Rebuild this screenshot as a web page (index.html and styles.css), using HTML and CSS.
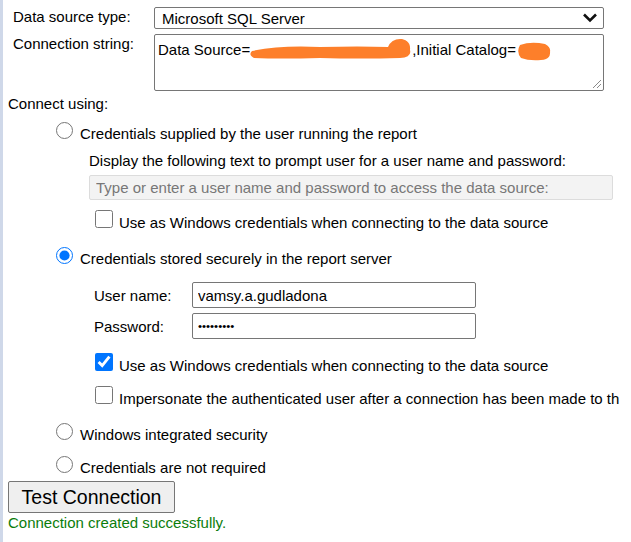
FILE: index.html
```html
<!DOCTYPE html>
<html lang="en">
<head>
<meta charset="utf-8">
<title>Data source</title>
<link rel="stylesheet" href="styles.css">
</head>
<body>
<div class="page">
  <div class="source-grid">
    <label class="field-label">Data source type:</label>
    <div class="select">
      <span>Microsoft SQL Server</span>
      <svg class="chevron" width="16" height="10" viewBox="0 0 16 10"><polyline points="2,1.5 8,7.5 14,1.5" fill="none" stroke="#111" stroke-width="2.6"/></svg>
    </div>
    <label class="field-label">Connection string:</label>
    <div class="textarea">
      <span>Data Source=</span><svg class="redact" width="162" height="24" viewBox="0 0 162 24"><path d="M2 14 Q30 8 70 10 Q110 9 138 10 Q142 1 152 2 Q161 4 160 13 Q162 20 150 21 Q110 22 70 21 Q30 22 4 21 Q-2 18 2 14 Z" fill="#fd7f2a"/></svg><span>,Initial Catalog=</span><svg class="redact2" width="34" height="20" viewBox="0 0 34 20"><path d="M3 4 Q14 0 28 3 Q34 6 33 11 Q34 18 24 19 Q12 20 4 17 Q-1 11 3 4 Z" fill="#fd7f2a"/></svg>
      <svg class="grip" width="10" height="10" viewBox="0 0 10 10"><line x1="1" y1="9" x2="9" y2="1" stroke="#8a8a8a" stroke-width="1"/><line x1="5" y1="9" x2="9" y2="5" stroke="#8a8a8a" stroke-width="1"/></svg>
    </div>
  </div>

  <div class="connect-label">Connect using:</div>

  <label class="radio-row gap-first"><input type="radio" name="cred"><span>Credentials supplied by the user running the report</span></label>
  <div class="prompt-text">Display the following text to prompt user for a user name and password:</div>
  <input class="prompt-input" type="text" disabled placeholder="Type or enter a user name and password to access the data source:">
  <label class="check-row gap-check1"><input type="checkbox"><span>Use as Windows credentials when connecting to the data source</span></label>

  <label class="radio-row gap-stored"><input type="radio" name="cred" checked><span>Credentials stored securely in the report server</span></label>
  <div class="cred-row gap-user">
    <label class="cred-label">User name:</label>
    <input class="cred-input" type="text" value="vamsy.a.gudladona">
  </div>
  <div class="cred-row gap-pass">
    <label class="cred-label">Password:</label>
    <input class="cred-input pw-input" type="password" value="password1">
  </div>
  <label class="check-row gap-check2"><input type="checkbox" checked><span>Use as Windows credentials when connecting to the data source</span></label>
  <label class="check-row gap-check3"><input type="checkbox"><span>Impersonate the authenticated user after a connection has been made to the data source</span></label>

  <label class="radio-row gap-windows"><input type="radio" name="cred"><span>Windows integrated security</span></label>
  <label class="radio-row gap-none"><input type="radio" name="cred"><span>Credentials are not required</span></label>

  <button class="test-btn" type="button">Test Connection</button>
  <div class="status">Connection created successfully.</div>
</div>
</body>
</html>
```

FILE: styles.css
```css
html, body {
  margin: 0;
  padding: 0;
  background: #fff;
  overflow: hidden;
}

body {
  font-family: "Liberation Sans", Arial, sans-serif;
  font-size: 15px;
  line-height: 17px;
  color: #000;
}

.page {
  width: 619px;
  min-height: 542px;
  box-sizing: border-box;
  border-left: 3px solid #cfd8e9;
  padding: 7px 0 0 5px;
  overflow: hidden;
  display: flex;
  flex-direction: column;
  align-items: flex-start;
}

.page input,
.page button {
  font-family: inherit;
  font-size: 15px;
  color: #000;
}

/* top grid */
.source-grid {
  display: grid;
  grid-template-columns: 141px 450px;
  row-gap: 5px;
  padding-left: 5px;
  align-items: start;
}

.field-label {
  padding-top: 1px;
}

.select {
  height: 22px;
  box-sizing: border-box;
  border: 1px solid #767676;
  border-radius: 2px;
  display: flex;
  align-items: center;
  justify-content: space-between;
  padding: 0 5px 0 7px;
}

.chevron {
  display: block;
}

.textarea {
  position: relative;
  height: 57px;
  box-sizing: border-box;
  border: 1px solid #767676;
  border-radius: 2px;
  padding: 6px 3px 0 3px;
  white-space: nowrap;
  overflow: hidden;
}

.textarea span,
.textarea svg {
  vertical-align: top;
}

.redact {
  margin-top: -4px;
}

.redact2 {
  margin-left: 1px;
}

.grip {
  position: absolute;
  right: 1px;
  bottom: 1px;
}

.connect-label {
  margin-top: 4px;
  height: 17px;
}

/* radio rows: control bottom sits just above the text baseline */
.radio-row {
  display: flex;
  align-items: baseline;
  height: 21px;
  padding-left: 48px;
  gap: 7px;
  white-space: nowrap;
}

.radio-row input {
  width: 17px;
  height: 17px;
  margin: 0 0 2px 0;
}

.gap-first { margin-top: 10px; }
.gap-stored { margin-top: 15px; }
.gap-windows { margin-top: 15px; }
.gap-none { margin-top: 12px; }

.prompt-text {
  margin-top: 9px;
  margin-left: 81px;
  height: 18px;
  line-height: 18px;
  white-space: nowrap;
}

.prompt-input {
  margin: 5px 0 0 81px;
  width: 524px;
  height: 25px;
  box-sizing: border-box;
  border: 1px solid #dcdcdc;
  border-radius: 2px;
  background: #f3f3f3;
  padding: 0 6px;
}

.prompt-input::placeholder {
  color: #777;
  opacity: 1;
}

/* checkbox rows */
.check-row {
  display: flex;
  align-items: baseline;
  height: 22px;
  padding-left: 87px;
  gap: 6px;
  white-space: nowrap;
}

.check-row input {
  width: 18px;
  height: 18px;
  margin: 0 0 2px 0;
}

.gap-check1 { margin-top: 10px; }
.gap-check2 { margin-top: 14px; }
.gap-check3 { margin-top: 11px; }

/* credentials */
.cred-row {
  display: flex;
  align-items: center;
  padding-left: 86px;
  height: 26px;
}

.gap-user { margin-top: 14px; }
.gap-pass { margin-top: 5px; }

.cred-label {
  width: 98px;
}

.cred-input {
  width: 284px;
  height: 26px;
  box-sizing: border-box;
  border: 1px solid #767676;
  border-radius: 2px;
  padding: 0 5px;
  margin: 0;
  background: #fff;
}

.page .pw-input {
  font-size: 11.5px;
}

/* button + status */
.test-btn {
  margin-top: 4px;
  width: 167px;
  height: 32px;
  box-sizing: border-box;
  border: 1px solid #767676;
  border-radius: 2px;
  background: #efefef;
  padding: 0;
  line-height: 22px;
}

.page .test-btn {
  font-size: 19.5px;
}

.status {
  margin-top: 1px;
  color: #0b7d0b;
}
```
